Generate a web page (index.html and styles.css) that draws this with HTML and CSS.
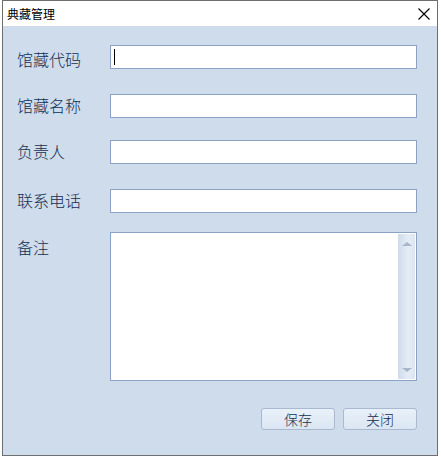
FILE: index.html
```html
<!DOCTYPE html>
<html lang="zh">
<head>
<meta charset="utf-8">
<title>典藏管理</title>
<link rel="stylesheet" href="styles.css">
</head>
<body>
<div class="window">
  <div class="titlebar">
    <span class="title">典藏管理</span>
    <span class="close">
      <svg width="12" height="12" viewBox="0 0 12 12"><path d="M0.5 0.5 L11.5 11.5 M11.5 0.5 L0.5 11.5" stroke="#000" stroke-width="1.1" fill="none"/></svg>
    </span>
  </div>
  <div class="content">
    <div class="form">
      <div class="row r1"><label class="lbl lbl-low">馆藏代码</label><div class="input"><span class="caret"></span></div></div>
      <div class="row r2"><label class="lbl">馆藏名称</label><div class="input"></div></div>
      <div class="row r3"><label class="lbl">负责人</label><div class="input"></div></div>
      <div class="row r4"><label class="lbl">联系电话</label><div class="input"></div></div>
      <div class="row r5"><label class="lbl lbl-top">备注</label>
        <div class="memo">
          <div class="memo-text"></div>
          <div class="scrollbar">
            <span class="arrow up"></span>
            <span class="arrow down"></span>
          </div>
        </div>
      </div>
    </div>
    <div class="buttons">
      <button class="btn">保存</button>
      <button class="btn">关闭</button>
    </div>
  </div>
</div>
</body>
</html>
```
FILE: styles.css
```css
html, body {
  margin: 0;
  padding: 0;
  background: #ffffff;
}
body {
  font-family: "Noto Sans CJK SC", "Noto Sans", sans-serif;
}
.window {
  box-sizing: border-box;
  margin-left: 2px;
  width: 436px;
  height: 456px;
  border: 1px solid #6f6f6f;
  display: flex;
  flex-direction: column;
  background: #cfdcec;
}
.titlebar {
  height: 25px;
  background: #ffffff;
  display: flex;
  align-items: center;
  justify-content: space-between;
  padding: 0 6px 0 4px;
  flex: none;
}
.title {
  font-size: 12px;
  color: #000;
  line-height: 25px;
}
.close {
  display: flex;
  width: 12px;
  height: 12px;
  margin-right: 1px;
  margin-top: 1px;
}
.content {
  flex: 1;
  padding: 19px 20px 0 14px;
  display: flex;
  flex-direction: column;
}
.form {
  display: flex;
  flex-direction: column;
}
.row {
  display: flex;
  align-items: center;
}
.r2 { margin-top: 25px; }
.r3 { margin-top: 22px; }
.r4 { margin-top: 25px; }
.r5 { margin-top: 19px; align-items: flex-start; }
.lbl {
  width: 93px;
  font-size: 16px;
  font-weight: 300;
  color: #142f52;
  line-height: 18px;
  padding-bottom: 2px;
}
.lbl-low {
  padding-bottom: 0;
  padding-top: 4px;
}
.lbl-top {
  padding-bottom: 0;
  padding-top: 6px;
}
.input {
  box-sizing: border-box;
  flex: 1;
  height: 24px;
  background: #ffffff;
  border: 1px solid #8aa2c4;
  position: relative;
}
.caret {
  position: absolute;
  left: 3px;
  top: 3px;
  width: 1px;
  height: 16px;
  background: #000;
}
.memo {
  box-sizing: border-box;
  flex: 1;
  height: 149px;
  background: #ffffff;
  border: 1px solid #8aa2c4;
  display: flex;
  padding: 1px 1px 1px 0;
}
.memo-text {
  flex: 1;
}
.scrollbar {
  width: 17px;
  background: linear-gradient(to right, #cfdcec, #e4ecf6 60%, #dce6f2);
  display: flex;
  flex-direction: column;
  justify-content: space-between;
  align-items: center;
  padding: 8px 0 7px;
  box-sizing: border-box;
}
.arrow {
  width: 0;
  height: 0;
  border-left: 5px solid transparent;
  border-right: 5px solid transparent;
}
.arrow.up {
  border-bottom: 4px solid #a7b6cb;
}
.arrow.down {
  border-top: 4px solid #a7b6cb;
}
.buttons {
  display: flex;
  justify-content: flex-end;
  gap: 8px;
  margin-top: 27px;
}
.btn {
  box-sizing: border-box;
  width: 74px;
  height: 22px;
  border: 1px solid #a9b9d0;
  border-radius: 3px;
  background: linear-gradient(to bottom, #e9f0f9, #dbe6f3);
  font-family: "Noto Sans CJK SC", "Noto Sans", sans-serif;
  font-size: 14px;
  font-weight: 300;
  color: #142f52;
  padding: 0;
  line-height: 20px;
}
```
